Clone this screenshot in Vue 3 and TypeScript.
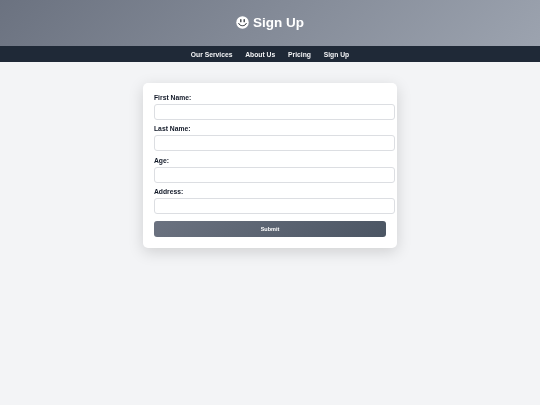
<script setup lang="ts">
const links: string[] = ['Our Services', 'About Us', 'Pricing', 'Sign Up']
const fields: string[] = ['First Name:', 'Last Name:', 'Age:', 'Address:']
</script>

<template>
  <div class="page">
    <header class="hero">
      <h1 class="title">
        <svg class="smile" viewBox="0 0 14 14" aria-hidden="true">
          <circle cx="7" cy="7" r="6.7" fill="#fff" />
          <path d="M5.2 3.8v2.4M8.8 3.8v2.4" stroke="#20252d" stroke-width="1.3" stroke-linecap="round" fill="none" />
          <path d="M2.8 7.6c1 3.8 7.4 3.8 8.4 0" stroke="#20252d" stroke-width="1" fill="none" />
        </svg>
        <span>Sign Up</span>
      </h1>
    </header>
    <nav class="nav">
      <a v-for="l in links" :key="l" class="link">{{ l }}</a>
    </nav>
    <main class="main">
      <form class="card" @submit.prevent>
        <div v-for="f in fields" :key="f" class="field">
          <label class="label">{{ f }}</label>
          <input class="input" type="text" />
        </div>
        <button class="submit" type="submit">Submit</button>
      </form>
    </main>
  </div>
</template>

<style>
html, body { margin: 0; background: #f3f4f6; }
</style>

<style scoped>
.page {
  width: 540px;
  min-height: 405px;
  background: #f3f4f6;
  font-family: "Liberation Sans", Arial, sans-serif;
  color: #111827;
}
.hero {
  height: 46px;
  box-sizing: border-box;
  padding-bottom: 1px;
  background: linear-gradient(135deg, #6b7280 0%, #9ca3af 100%);
  display: flex;
  align-items: center;
  justify-content: center;
}
.title {
  margin: 0;
  display: flex;
  align-items: center;
  gap: 4px;
  color: #fff;
  font-size: 13.5px;
  font-weight: 700;
  will-change: transform;
}
.smile { width: 13px; height: 13px; display: block; }
.nav {
  height: 16px;
  background: #1f2937;
  display: flex;
  align-items: center;
  justify-content: center;
  gap: 12.8px;
  will-change: transform;
}
.link {
  color: #f3f4f6;
  font-size: 6.75px;
  font-weight: 700;
}
.main {
  display: flex;
  justify-content: center;
  padding-top: 21px;
}
.card {
  width: 254px;
  height: 165px;
  box-sizing: border-box;
  padding: 10.75px 11px;
  background: #fff;
  border-radius: 5px;
  box-shadow: 0 4px 15px rgba(0, 0, 0, 0.15);
  will-change: transform;
}
.field { margin-bottom: 5.5px; }
.label {
  display: block;
  font-size: 6.75px;
  font-weight: 700;
  line-height: 8px;
  margin-bottom: 2px;
}
.input {
  display: block;
  box-sizing: content-box;
  width: 100%;
  height: 14px;
  margin: 0;
  padding: 0 3.5px;
  border: 1px solid #dcdee2;
  border-radius: 3px;
  background: #fff;
}
.submit {
  display: block;
  width: 100%;
  height: 16.6px;
  margin-top: 6.5px;
  padding: 0;
  border: none;
  border-radius: 3px;
  background: linear-gradient(135deg, #6b7280 0%, #4b5563 100%);
  color: #fff;
  font-family: inherit;
  font-size: 5.5px;
  font-weight: 700;
}
</style>
